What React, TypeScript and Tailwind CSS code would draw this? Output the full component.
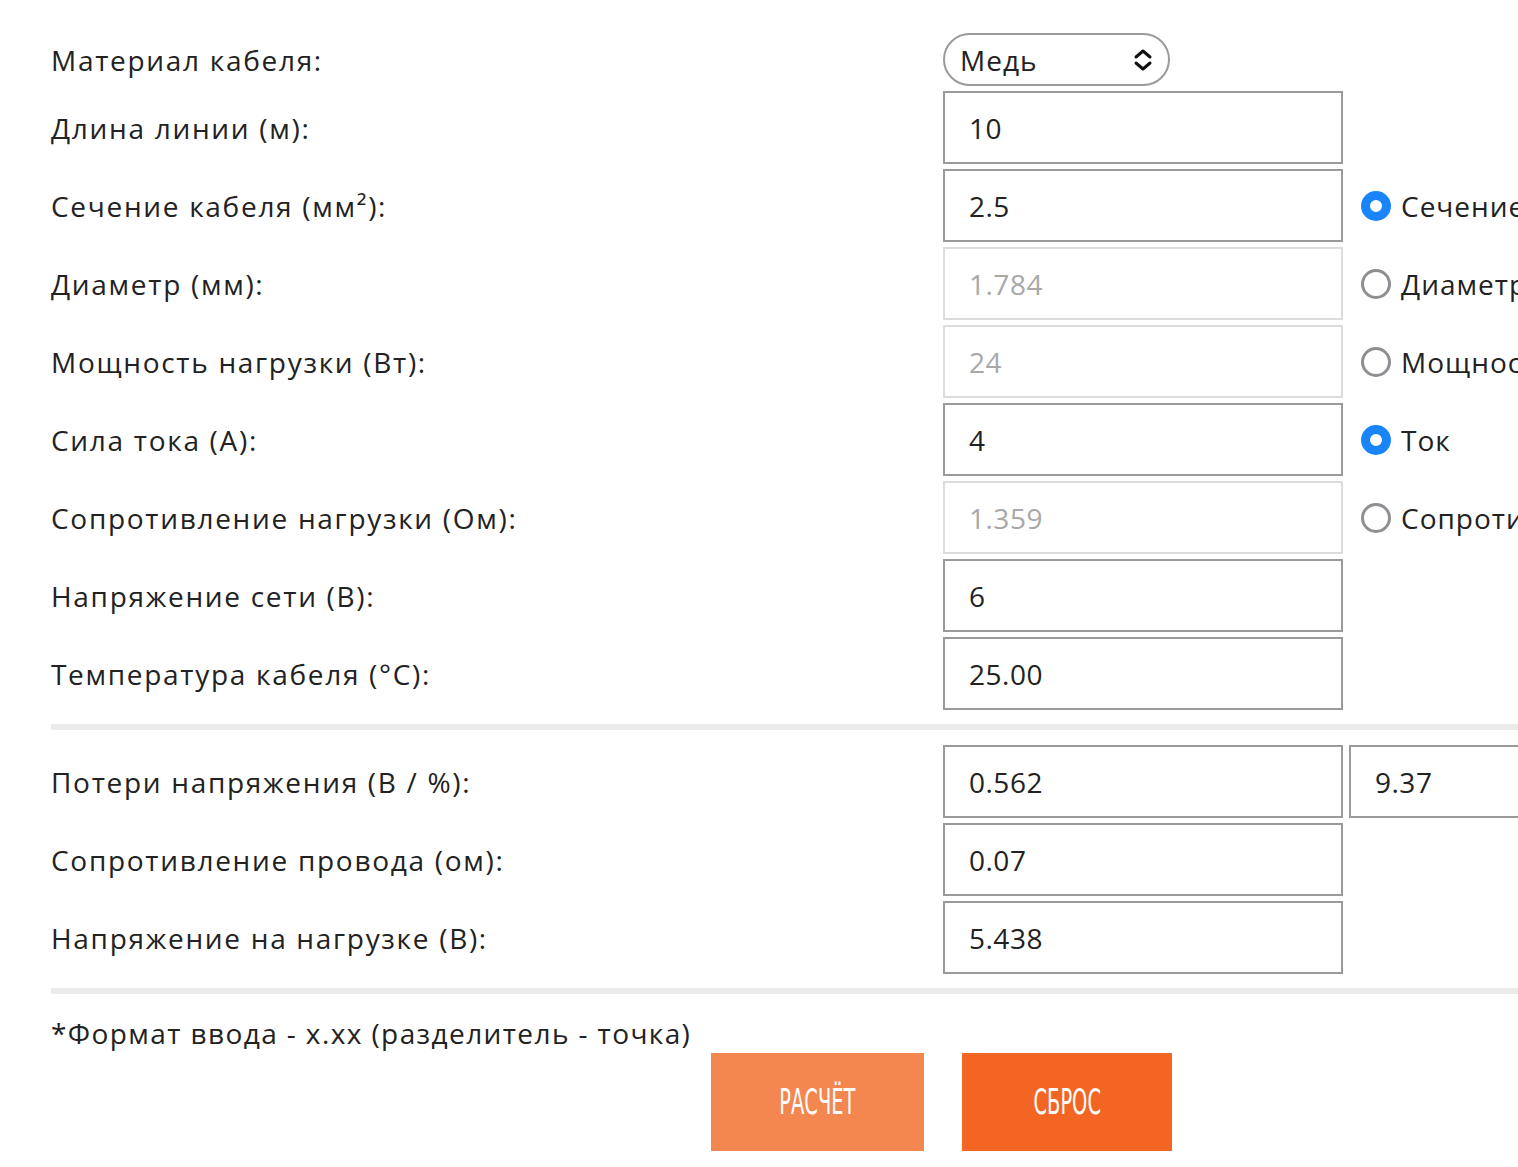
import React from "react";

const font = { fontFamily: "'Open Sans', 'Noto Sans', sans-serif" };

type Row = { label: React.ReactNode; value: string; disabled?: boolean; radio?: { text: string; checked: boolean } };

const rows: Row[] = [
  { label: "Длина линии (м):", value: "10" },
  { label: <>Сечение кабеля (мм²):</>, value: "2.5", radio: { text: "Сечение", checked: true } },
  { label: "Диаметр (мм):", value: "1.784", disabled: true, radio: { text: "Диаметр", checked: false } },
  { label: "Мощность нагрузки (Вт):", value: "24", disabled: true, radio: { text: "Мощность", checked: false } },
  { label: "Сила тока (А):", value: "4", radio: { text: "Ток", checked: true } },
  { label: "Сопротивление нагрузки (Ом):", value: "1.359", disabled: true, radio: { text: "Сопротивление", checked: false } },
  { label: "Напряжение сети (В):", value: "6" },
  { label: "Температура кабеля (°C):", value: "25.00" },
];

function Radio({ checked }: { checked: boolean }) {
  return checked ? (
    <span className="block w-[30px] h-[30px] rounded-full border-[9px] border-[#1a84fb] bg-white shrink-0" />
  ) : (
    <span className="block w-[30px] h-[30px] rounded-full border-[3px] border-[#8e8e93] bg-white shrink-0" />
  );
}

function Input({ value, disabled }: { value: string; disabled?: boolean }) {
  return (
    <div
      className={
        "w-[400px] h-[73px] shrink-0 border-2 flex items-center pl-[24px] text-[28px] tracking-[0.5px] " +
        (disabled ? "border-[#dcdcdc] text-[#a8a8a8]" : "border-[#9a9a9a] text-[#222]")
      }
    >
      {value}
    </div>
  );
}

function Label({ children }: { children: React.ReactNode }) {
  return <div className="w-[892px] shrink-0 text-[28px] tracking-[1.7px] text-[#222] leading-none">{children}</div>;
}

const btnFont = { fontFamily: "'Liberation Sans Narrow', 'DejaVu Sans Condensed', 'Liberation Sans', sans-serif" };

export default function App() {
  return (
    <div className="w-[1518px] h-[1167px] overflow-hidden bg-white" style={font}>
      <div className="pl-[51px] pt-[33px] w-[1700px]">
        <div className="flex items-center h-[53px]">
          <Label>Материал кабеля:</Label>
          <div className="w-[227px] h-[53px] shrink-0 rounded-full border-2 border-[#9a9a9a] flex items-center justify-between pl-[15px] pr-[14px] text-[28px] text-[#222] tracking-[1px]">
            <span>Медь</span>
            <svg width="22" height="24" viewBox="0 0 22 24" fill="none" stroke="#111" strokeWidth="3" strokeLinecap="round" strokeLinejoin="round">
              <path d="M4 9 L11 3 L18 9" />
              <path d="M4 15 L11 21 L18 15" />
            </svg>
          </div>
        </div>
        <div className="flex flex-col gap-[5px] mt-[5px]">
          {rows.map((r, i) => (
            <div key={i} className="flex items-center h-[73px]">
              <Label>{r.label}</Label>
              <Input value={r.value} disabled={r.disabled} />
              {r.radio && (
                <div className="flex items-center ml-[18px] gap-[10px] text-[28px] text-[#222] whitespace-nowrap shrink-0 tracking-[1px]">
                  <Radio checked={r.radio.checked} />
                  <span>{r.radio.text}</span>
                </div>
              )}
            </div>
          ))}
        </div>
        <div className="h-[6px] bg-[#ebebeb] mt-[14px] mb-[15px]" />
        <div className="flex flex-col gap-[5px]">
          <div className="flex items-center h-[73px]">
            <Label>Потери напряжения (В / %):</Label>
            <Input value="0.562" />
            <div className="ml-[6px] shrink-0">
              <Input value="9.37" />
            </div>
          </div>
          <div className="flex items-center h-[73px]">
            <Label>Сопротивление провода (ом):</Label>
            <Input value="0.07" />
          </div>
          <div className="flex items-center h-[73px]">
            <Label>Напряжение на нагрузке (В):</Label>
            <Input value="5.438" />
          </div>
        </div>
        <div className="h-[6px] bg-[#ebebeb] mt-[14px]" />
        <div className="mt-[25px] text-[28px] tracking-[1.4px] text-[#222] leading-none">*Формат ввода - x.xx (разделитель - точка)</div>
        <div className="flex gap-[38px] ml-[660px] mt-[6px]">
          <button className="w-[213px] h-[98px] shrink-0 bg-[#f48650] text-white flex items-center justify-center">
            <span className="inline-block text-[36px] scale-x-[0.6]" style={btnFont}>РАСЧЁТ</span>
          </button>
          <button className="w-[210px] h-[98px] shrink-0 bg-[#f26522] text-white flex items-center justify-center">
            <span className="inline-block text-[36px] scale-x-[0.6]" style={btnFont}>СБРОС</span>
          </button>
        </div>
      </div>
    </div>
  );
}
